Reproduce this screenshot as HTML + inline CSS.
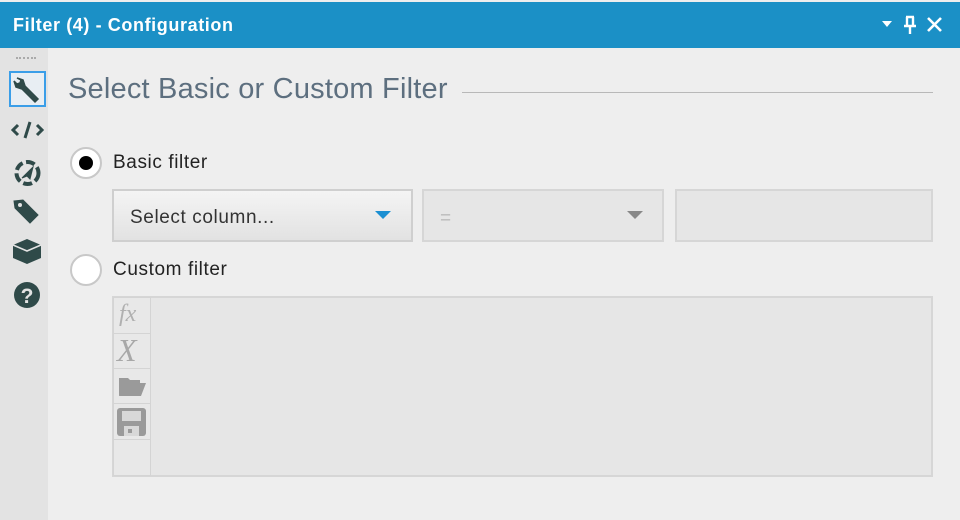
<!DOCTYPE html>
<html><head><style>
*{margin:0;padding:0;box-sizing:border-box}
body{width:960px;height:520px;background:#eeeeee;font-family:"Liberation Sans",sans-serif;position:relative;overflow:hidden}
.title{position:absolute;left:0;top:2px;width:960px;height:46px;background:#1b90c6;color:#fff;font-weight:bold;font-size:18px;letter-spacing:0.6px;padding:13px 0 0 13px}
.side{position:absolute;left:0;top:48px;width:48px;height:472px;background:#e3e3e3}
.ab{position:absolute}
.h{position:absolute;left:68px;top:73px;font-size:29px;color:#5d6f7f;letter-spacing:0.2px}
.radio{position:absolute;width:32px;height:32px;border-radius:50%;background:#fff;border:2px solid #c8c8c8}
.lbl{position:absolute;font-size:19px;color:#222;letter-spacing:0.6px}
.dd{position:absolute;border:2px solid #d6d6d6;height:53px}
.cell{position:absolute;left:113px;width:38px;height:37px;border:1px solid #d4d4d4;background:#e8e8e8}
</style></head><body>
<div class="title">Filter (4) - Configuration</div>
<svg class="ab" style="left:878px;top:14px" width="70" height="22">
<path d="M4 7h10l-5 6z" fill="#fff"/>
<path d="M28 3h8M29 3v9M35 3v9M26 12h12M32 12v8" stroke="#fff" stroke-width="2.4" fill="none"/>
<path d="M50 4l13 13M63 4L50 17" stroke="#fff" stroke-width="2.6"/>
</svg>
<div class="side"></div>
<div class="ab" style="left:16px;top:57px;width:20px;border-top:2px dotted #aaa"></div>
<div class="ab" style="left:9px;top:71px;width:37px;height:36px;border:2px solid #3a9ee8;background:#e8eef3"></div>
<svg class="ab" style="left:8px;top:70px" width="40" height="250">
<g fill="#2f4a49" stroke="#2f4a49">
<path d="M9 8l6 2 2 6 13 13-3 3-13-13-6-2-2-6 3 3 3-1 1-3z" stroke-width="1.5"/>
<path d="M10 55l-5 5 5 5M29 55l5 5-5 5M22 52l-5 16" stroke-width="3" fill="none"/>
<circle cx="19.5" cy="103" r="11" fill="none" stroke-width="4" stroke-dasharray="9 3.5"/>
<path d="M14 108l11-11-3 12-3-3z" stroke-width="1"/>
<path d="M6 131l9-1 15 15-8 8-15-15z" stroke-width="1"/>
<circle cx="12" cy="135" r="2" fill="#e3e3e3" stroke="none"/>
<path d="M5 175l14-6 14 6v13l-14 6-14-6z" stroke="none"/>
<path d="M5 175l14 6 14-6" stroke="#e3e3e3" stroke-width="1.5" fill="none"/>
<circle cx="19" cy="225" r="13" stroke="none"/>
</g>
<text x="19" y="233" font-size="21" font-weight="bold" fill="#e3e3e3" text-anchor="middle" font-family="Liberation Sans">?</text>
</svg>
<div class="ab" style="left:48px;top:48px;width:906px;height:472px;background:#eeeeee"></div>
<div class="h">Select Basic or Custom Filter</div>
<div class="ab" style="left:462px;top:92px;width:471px;height:1px;background:#b8b8b8"></div>
<div class="radio" style="left:70px;top:147px"></div>
<div class="ab" style="left:79px;top:156px;width:14px;height:14px;border-radius:50%;background:#000"></div>
<div class="lbl" style="left:113px;top:152px">Basic filter</div>
<div class="dd" style="left:112px;top:189px;width:301px;background:linear-gradient(#f4f4f4,#e2e2e2);border-color:#cfcfcf"></div>
<div class="lbl" style="left:130px;top:207px;color:#333">Select column...</div>
<svg class="ab" style="left:373px;top:210px" width="20" height="12"><path d="M2 1h16l-8 8z" fill="#1b8fd2"/></svg>
<div class="dd" style="left:422px;top:189px;width:242px;background:#e6e6e6"></div>
<div class="lbl" style="left:440px;top:208px;color:#bbb">=</div>
<svg class="ab" style="left:625px;top:210px" width="20" height="12"><path d="M2 1h16l-8 8z" fill="#888"/></svg>
<div class="dd" style="left:675px;top:189px;width:258px;background:#e6e6e6"></div>
<div class="radio" style="left:70px;top:254px"></div>
<div class="lbl" style="left:113px;top:259px">Custom filter</div>
<div class="ab" style="left:112px;top:296px;width:821px;height:181px;border:2px solid #d6d6d6;background:#e6e6e6"></div>
<div class="cell" style="top:297px"></div>
<div class="cell" style="top:333px"></div>
<div class="cell" style="top:368px"></div>
<div class="cell" style="top:403px"></div>
<div class="cell" style="top:439px;height:37px"></div>
<div class="ab" style="left:119px;top:301px;font-family:'Liberation Serif',serif;font-style:italic;font-size:24px;color:#b0b0b0">fx</div>
<div class="ab" style="left:117px;top:332px;font-family:'Liberation Serif',serif;font-style:italic;font-size:32px;color:#a8a8a8">X</div>
<svg class="ab" style="left:116px;top:371px" width="32" height="30"><path d="M3 7h9l2 2h10v4H8l-5 12z" fill="#9a9a9a"/><path d="M7 12h23l-5 13H3z" fill="#9a9a9a"/></svg>
<svg class="ab" style="left:116px;top:406px" width="32" height="32"><rect x="1" y="2" width="29" height="28" rx="3" fill="#9a9a9a"/><rect x="6" y="5" width="19" height="10" fill="#d8d8d8"/><rect x="8" y="20" width="15" height="10" fill="#d8d8d8"/><rect x="12" y="23" width="4" height="4" fill="#9a9a9a"/></svg>
</body></html>
